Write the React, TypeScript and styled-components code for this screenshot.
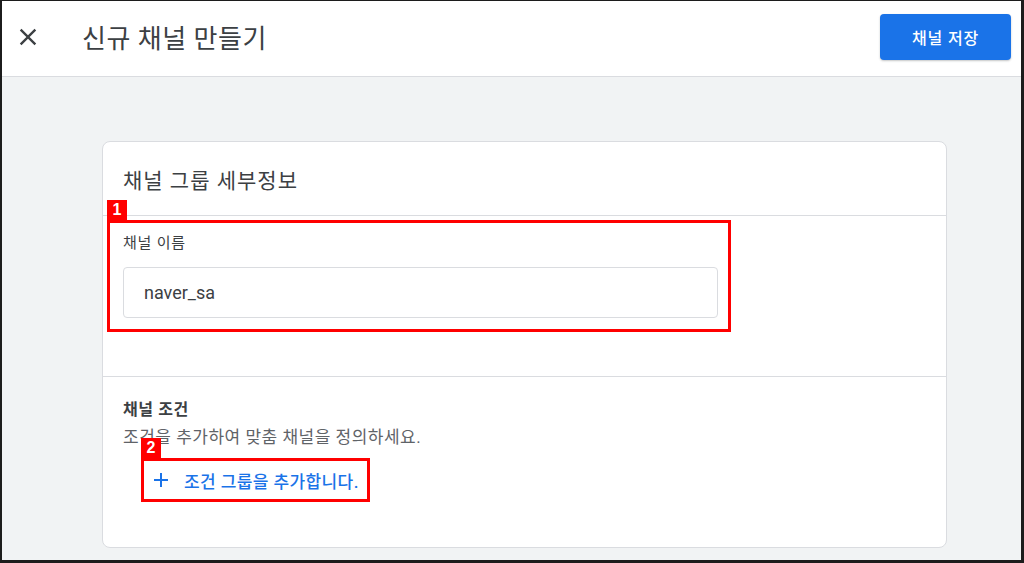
import styled, { createGlobalStyle } from "styled-components";

const GlobalStyle = createGlobalStyle`
	html, body {
		margin: 0;
		padding: 0;
		background: #1c1c1c;
	}
	* {
		box-sizing: border-box;
	}
`;

const Frame = styled.div`
	width: 1024px;
	height: 563px;
	display: flex;
	flex-direction: column;
	border-style: solid;
	border-color: #1c1c1c;
	border-width: 1px 3px 3px 2px;
	background: #f1f3f4;
	font-family: Roboto, "Noto Sans CJK KR", sans-serif;
	overflow: hidden;
`;

const Header = styled.header`
	height: 76px;
	flex-shrink: 0;
	display: flex;
	align-items: center;
	padding: 0 10px 4px 12px;
	background: #ffffff;
	border-bottom: 1px solid #dadce0;
`;

const CloseButton = styled.button`
	width: 28px;
	height: 28px;
	padding: 0;
	border: none;
	background: none;
	display: flex;
	align-items: center;
	justify-content: center;
	color: #3c4043;
	cursor: pointer;
`;

const PageTitle = styled.h1`
	margin: 0 0 0 40px;
	font-size: 26px;
	letter-spacing: 0.5px;
	font-weight: 400;
	color: #3c4043;
	flex: 1;
`;

const SaveButton = styled.button`
	width: 131px;
	height: 46px;
	border: none;
	border-radius: 4px;
	background: #1a73e8;
	color: #ffffff;
	font-family: inherit;
	font-size: 16px;
	letter-spacing: 0.8px;
	font-weight: 500;
	box-shadow: 0 1px 2px rgba(60, 64, 67, 0.3);
	cursor: pointer;
`;

const Main = styled.main`
	flex: 1;
	display: flex;
	padding: 64px 0 12px 100px;
`;

const Card = styled.section`
	width: 845px;
	display: flex;
	flex-direction: column;
	background: #ffffff;
	border: 1px solid #dadce0;
	border-radius: 8px;
`;

const CardHeader = styled.div`
	height: 74px;
	display: flex;
	align-items: center;
	padding-left: 20px;
	border-bottom: 1px solid #dadce0;
	font-size: 21px;
	letter-spacing: 1px;
	color: #3c4043;
`;

const NameSection = styled.div`
	padding: 4px 4px 44px;
	border-bottom: 1px solid #dadce0;
`;

const Highlight = styled.div<{ $width?: number }>`
	position: relative;
	width: ${(p) => (p.$width ? `${p.$width}px` : "auto")};
	border: 3px solid #ff0000;
`;

const Badge = styled.span`
	position: absolute;
	top: -23px;
	left: -3px;
	width: 20px;
	height: 20px;
	display: flex;
	align-items: center;
	justify-content: center;
	background: #ff0000;
	color: #ffffff;
	font-family: "Liberation Sans", Arial, sans-serif;
	font-size: 16px;
	font-weight: 700;
	line-height: 1;
`;

const FieldBox = styled.div`
	padding: 10px 10px 11px 13px;
`;

const FieldLabel = styled.label`
	display: block;
	font-size: 15px;
	letter-spacing: 0.8px;
	line-height: 20px;
	color: #3c4043;
	margin-bottom: 14px;
`;

const TextInput = styled.input`
	display: block;
	width: 595px;
	height: 51px;
	padding: 0 20px;
	border: 1px solid #dadce0;
	border-radius: 4px;
	font-family: inherit;
	font-size: 18px;
	color: #3c4043;
	outline: none;
`;

const ConditionSection = styled.div`
	flex: 1;
	padding: 22px 20px 0;
`;

const SectionTitle = styled.div`
	font-size: 16px;
	letter-spacing: 0.6px;
	line-height: 22px;
	font-weight: 700;
	color: #3c4043;
`;

const SectionHint = styled.div`
	font-size: 17px;
	letter-spacing: 0.5px;
	line-height: 22px;
	color: #5f6368;
	margin-top: 5px;
`;

const AddRow = styled.div`
	display: flex;
	margin: 10px 0 0 18px;
`;

const AddButton = styled.button`
	display: flex;
	align-items: center;
	gap: 15px;
	height: 38px;
	padding: 0 8px 0 9px;
	border: none;
	background: none;
	color: #1a73e8;
	font-family: inherit;
	font-size: 17px;
	letter-spacing: 0.4px;
	font-weight: 500;
	cursor: pointer;
`;

function App() {
	return (
		<>
			<GlobalStyle />
			<Frame>
				<Header>
					<CloseButton aria-label="닫기">
						<svg width="28" height="28" viewBox="0 0 24 24" fill="currentColor">
							<path d="M19 6.41L17.59 5 12 10.59 6.41 5 5 6.41 10.59 12 5 17.59 6.41 19 12 13.41 17.59 19 19 17.59 13.41 12z" />
						</svg>
					</CloseButton>
					<PageTitle>신규 채널 만들기</PageTitle>
					<SaveButton>채널 저장</SaveButton>
				</Header>
				<Main>
					<Card>
						<CardHeader>채널 그룹 세부정보</CardHeader>
						<NameSection>
							<Highlight $width={624}>
								<Badge>1</Badge>
								<FieldBox>
									<FieldLabel>채널 이름</FieldLabel>
									<TextInput defaultValue="naver_sa" />
								</FieldBox>
							</Highlight>
						</NameSection>
						<ConditionSection>
							<SectionTitle>채널 조건</SectionTitle>
							<SectionHint>조건을 추가하여 맞춤 채널을 정의하세요.</SectionHint>
							<AddRow>
								<Highlight>
									<Badge>2</Badge>
									<AddButton>
										<svg width="16" height="16" viewBox="0 0 16 16">
											<path d="M8 1v14M1 8h14" stroke="currentColor" strokeWidth="2" />
										</svg>
										조건 그룹을 추가합니다.
									</AddButton>
								</Highlight>
							</AddRow>
						</ConditionSection>
					</Card>
				</Main>
			</Frame>
		</>
	);
}

export default App;
